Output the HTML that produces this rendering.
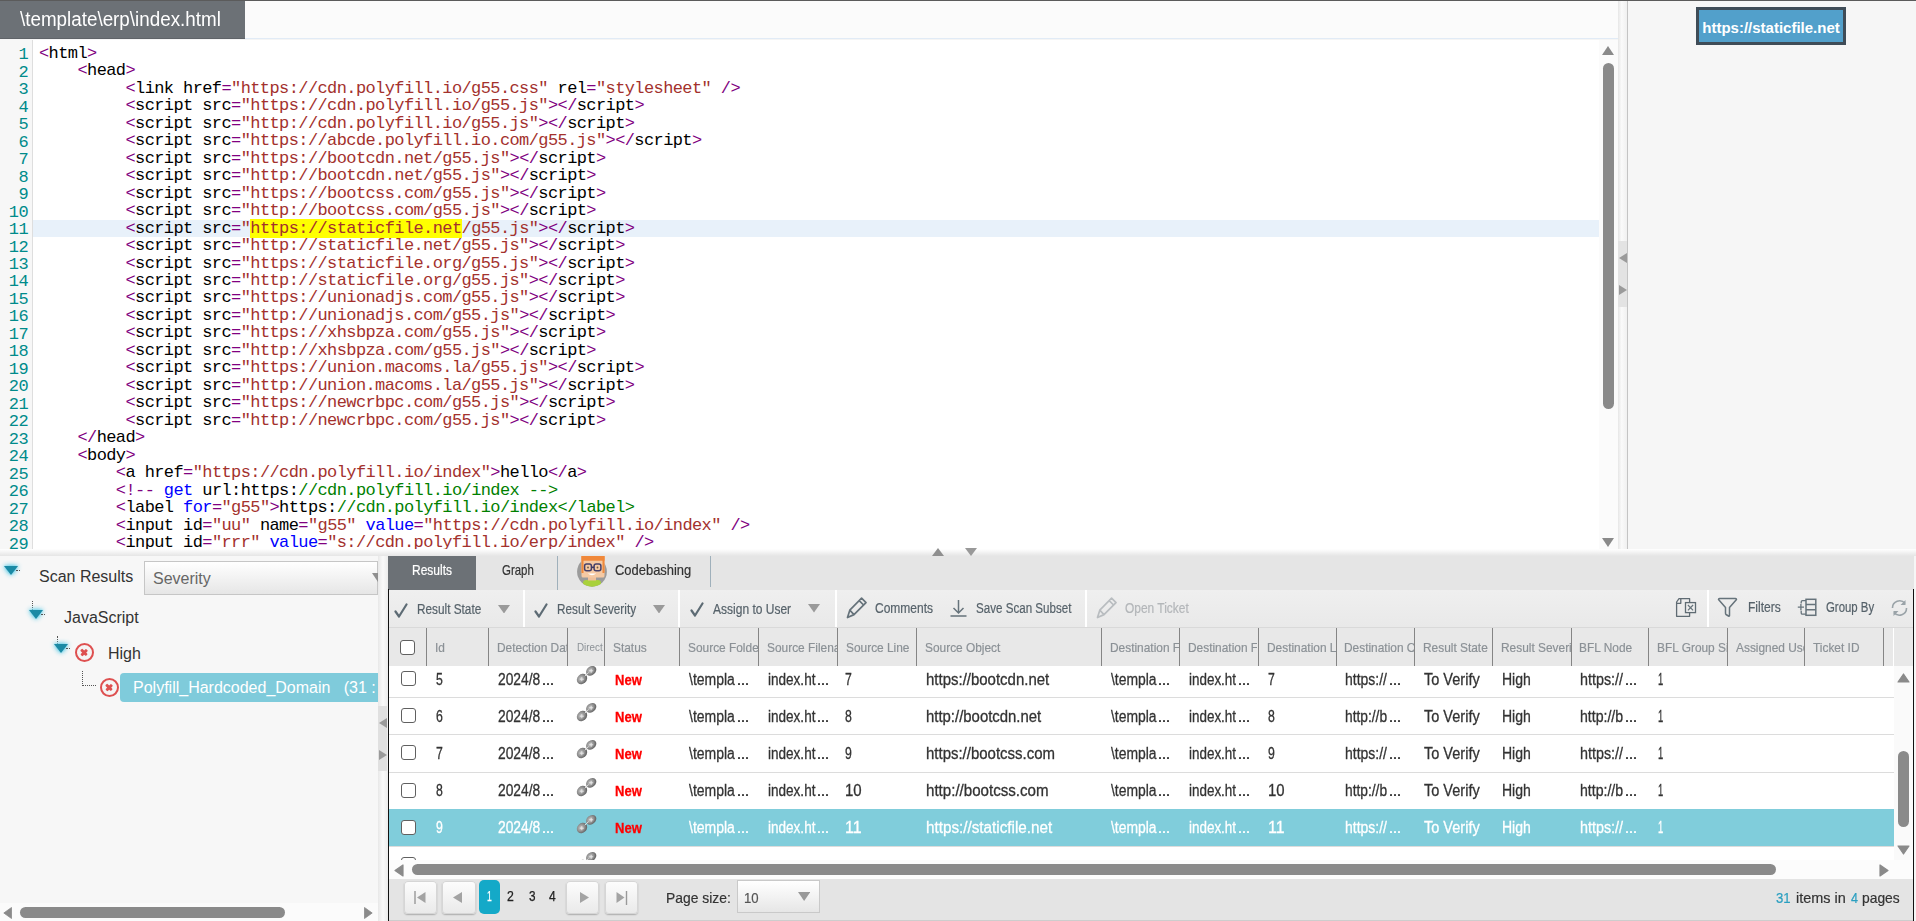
<!DOCTYPE html>
<html><head><meta charset="utf-8"><style>
*{margin:0;padding:0;box-sizing:border-box}
html,body{width:1916px;height:921px;overflow:hidden;background:#f5f5f5;font-family:"Liberation Sans",sans-serif}
.abs{position:absolute}
#topline{left:0;top:0;width:1916px;height:1px;background:#5b5b5b}
#tabbar{left:0;top:1px;width:1618px;height:38px;background:#fbfbfb;border-bottom:1px solid #e1ebf6}
#tab{left:0;top:1px;width:245px;height:38px;background:#6c7176;border-bottom:1px solid #5f6368;color:#fff}
#tabt{left:20px;top:10.2px;font-size:19.5px;line-height:1;white-space:pre;transform:scaleX(0.965);transform-origin:0 0}
#editor{left:0;top:40px;width:1599px;height:509px;background:#fff;overflow:hidden}
#gutter{left:0;top:0;width:33px;height:509px;background:#f7f7f7;border-right:1px solid #dedede}
#curline{left:33px;top:180px;width:1566px;height:17px;background:#e8f1fa}
#nums{left:0;top:6.4px;width:28px;text-align:right;color:#008b8b;letter-spacing:-0.6px;font:17px/17.47px "Liberation Mono",monospace;white-space:pre}
#code{left:39px;top:4.9px;letter-spacing:-0.6px;font:17px/17.47px "Liberation Mono",monospace;white-space:pre;color:#000}
.hl{background:#ffff00;color:#a3312d}
#vscroll{left:1599px;top:40px;width:19px;height:509px;background:#fbfbfb}
#vsplit{left:1618px;top:1px;width:10px;height:548px;background:linear-gradient(90deg,#e6e6e6,#fafafa 40%,#f0f0f0);border-right:1px solid #c4c4c4}
#rpanel{left:1628px;top:1px;width:288px;height:548px;background:#f6f6f6}
#btn{left:1696px;top:7px;width:150px;height:38px;background:#52a0cb;border:3px solid #3f4c57;color:#fff;font-weight:bold;font-size:15px;line-height:35px;text-align:center}
#hsplit{left:0;top:549px;width:1916px;height:7px;background:linear-gradient(#fff,#e5e5e5)}
#lpanel{left:0;top:556px;width:378px;height:365px;background:#f7f7f7;overflow:hidden}
#lsplit{left:378px;top:556px;width:10px;height:365px;background:linear-gradient(90deg,#e8e8e8,#fafafa 50%,#ececec)}
#rbottom{left:388px;top:556px;width:1526px;height:365px;background:#e5e5e5}
/* editor scrollbar */
#vs-up{left:1602px;top:46px;width:0;height:0;border-left:6.5px solid transparent;border-right:6.5px solid transparent;border-bottom:9px solid #8a8a8a}
#vs-thumb{left:1603px;top:63px;width:11px;height:346px;background:#8a8a8a;border-radius:5.5px}
#vs-dn{left:1602px;top:538px;width:0;height:0;border-left:6.5px solid transparent;border-right:6.5px solid transparent;border-top:9px solid #8a8a8a}
#vsplit-mid{left:1618px;top:241px;width:9px;height:66px;background:#e3e3e3}
.arrL{width:0;height:0;border-top:5px solid transparent;border-bottom:5px solid transparent;border-right:8px solid #9a9a9a}
.arrR{width:0;height:0;border-top:5px solid transparent;border-bottom:5px solid transparent;border-left:8px solid #9a9a9a}
.arrU{width:0;height:0;border-left:6.5px solid transparent;border-right:6.5px solid transparent;border-bottom:8px solid #8f8f8f}
.arrD{width:0;height:0;border-left:6px solid transparent;border-right:6px solid transparent;border-top:8px solid #999}
/* left panel */
.tri{width:0;height:0;border-left:7px solid transparent;border-right:7px solid transparent;border-top:9.5px solid #1a8aa5;filter:drop-shadow(0 0 2.5px #58c8e4) drop-shadow(0 0 1px #8fdcef)}
.lbl{font-size:16px;color:#333;white-space:nowrap}
#sev{left:144px;top:561px;width:234px;height:34px;background:linear-gradient(#fff,#e6e6e6);border:1px solid #c6c6c6;font-size:16px;color:#666;line-height:34px;padding-left:8px}
.dotv{border-left:1px dotted #555}
.doth{border-top:1px dotted #555}
.xic{width:19px;height:19px;border:2.6px solid #de5050;border-radius:50%;background:#f5f5f5}
.xic:before,.xic:after{content:"";position:absolute;left:2.7px;top:5.6px;width:8.4px;height:2.7px;border-radius:1px;background:#de5050}
.xic:before{transform:rotate(45deg)}.xic:after{transform:rotate(-45deg)}
#selnode{left:120px;top:673px;width:258px;height:29px;background:#7fcbdb;border-radius:4px 0 0 4px;color:#fff;font-size:16px;line-height:29px;padding-left:13px;white-space:pre;overflow:hidden}
#lhs{left:0;top:903px;width:378px;height:18px;background:#fbfbfb}
#lhs-thumb{left:20px;top:907px;width:265px;height:11px;background:#8a8a8a;border-radius:5.5px}
.t{position:absolute;white-space:pre;line-height:1;transform-origin:0 0}

</style></head><body>
<div id="topline" class="abs"></div>
<div id="tabbar" class="abs"></div>
<div id="tab" class="abs"></div><div id="tabt" class="abs" style="color:#fff">\template\erp\index.html</div>
<div id="editor" class="abs">
 <div id="gutter" class="abs"></div>
 <div id="curline" class="abs"></div>
 <div id="nums" class="abs">1
2
3
4
5
6
7
8
9
10
11
12
13
14
15
16
17
18
19
20
21
22
23
24
25
26
27
28
29</div>
 <div id="code" class="abs"><span style="color:#800080">&lt;</span><span style="color:#000">html</span><span style="color:#800080">&gt;</span>
    <span style="color:#800080">&lt;</span><span style="color:#000">head</span><span style="color:#800080">&gt;</span>
         <span style="color:#800080">&lt;</span><span style="color:#000">link href</span><span style="color:#800080">=</span><span style="color:#a3312d">&quot;https://cdn.polyfill.io/g55.css&quot;</span><span style="color:#000"> rel</span><span style="color:#800080">=</span><span style="color:#a3312d">&quot;stylesheet&quot;</span><span style="color:#800080"> /&gt;</span>
         <span style="color:#800080">&lt;</span><span style="color:#000">script src</span><span style="color:#800080">=</span><span style="color:#a3312d">&quot;https://cdn.polyfill.io/g55.js&quot;</span><span style="color:#800080">&gt;&lt;/</span><span style="color:#000">script</span><span style="color:#800080">&gt;</span>
         <span style="color:#800080">&lt;</span><span style="color:#000">script src</span><span style="color:#800080">=</span><span style="color:#a3312d">&quot;http://cdn.polyfill.io/g55.js&quot;</span><span style="color:#800080">&gt;&lt;/</span><span style="color:#000">script</span><span style="color:#800080">&gt;</span>
         <span style="color:#800080">&lt;</span><span style="color:#000">script src</span><span style="color:#800080">=</span><span style="color:#a3312d">&quot;https://abcde.polyfill.io.com/g55.js&quot;</span><span style="color:#800080">&gt;&lt;/</span><span style="color:#000">script</span><span style="color:#800080">&gt;</span>
         <span style="color:#800080">&lt;</span><span style="color:#000">script src</span><span style="color:#800080">=</span><span style="color:#a3312d">&quot;https://bootcdn.net/g55.js&quot;</span><span style="color:#800080">&gt;&lt;/</span><span style="color:#000">script</span><span style="color:#800080">&gt;</span>
         <span style="color:#800080">&lt;</span><span style="color:#000">script src</span><span style="color:#800080">=</span><span style="color:#a3312d">&quot;http://bootcdn.net/g55.js&quot;</span><span style="color:#800080">&gt;&lt;/</span><span style="color:#000">script</span><span style="color:#800080">&gt;</span>
         <span style="color:#800080">&lt;</span><span style="color:#000">script src</span><span style="color:#800080">=</span><span style="color:#a3312d">&quot;https://bootcss.com/g55.js&quot;</span><span style="color:#800080">&gt;&lt;/</span><span style="color:#000">script</span><span style="color:#800080">&gt;</span>
         <span style="color:#800080">&lt;</span><span style="color:#000">script src</span><span style="color:#800080">=</span><span style="color:#a3312d">&quot;http://bootcss.com/g55.js&quot;</span><span style="color:#800080">&gt;&lt;/</span><span style="color:#000">script</span><span style="color:#800080">&gt;</span>
         <span style="color:#800080">&lt;</span><span style="color:#000">script src</span><span style="color:#800080">=</span><span style="color:#a3312d">&quot;</span><span class="hl">https://staticfile.net</span><span style="color:#a3312d">/g55.js&quot;</span><span style="color:#800080">&gt;&lt;/</span><span style="color:#000">script</span><span style="color:#800080">&gt;</span>
         <span style="color:#800080">&lt;</span><span style="color:#000">script src</span><span style="color:#800080">=</span><span style="color:#a3312d">&quot;http://staticfile.net/g55.js&quot;</span><span style="color:#800080">&gt;&lt;/</span><span style="color:#000">script</span><span style="color:#800080">&gt;</span>
         <span style="color:#800080">&lt;</span><span style="color:#000">script src</span><span style="color:#800080">=</span><span style="color:#a3312d">&quot;https://staticfile.org/g55.js&quot;</span><span style="color:#800080">&gt;&lt;/</span><span style="color:#000">script</span><span style="color:#800080">&gt;</span>
         <span style="color:#800080">&lt;</span><span style="color:#000">script src</span><span style="color:#800080">=</span><span style="color:#a3312d">&quot;http://staticfile.org/g55.js&quot;</span><span style="color:#800080">&gt;&lt;/</span><span style="color:#000">script</span><span style="color:#800080">&gt;</span>
         <span style="color:#800080">&lt;</span><span style="color:#000">script src</span><span style="color:#800080">=</span><span style="color:#a3312d">&quot;https://unionadjs.com/g55.js&quot;</span><span style="color:#800080">&gt;&lt;/</span><span style="color:#000">script</span><span style="color:#800080">&gt;</span>
         <span style="color:#800080">&lt;</span><span style="color:#000">script src</span><span style="color:#800080">=</span><span style="color:#a3312d">&quot;http://unionadjs.com/g55.js&quot;</span><span style="color:#800080">&gt;&lt;/</span><span style="color:#000">script</span><span style="color:#800080">&gt;</span>
         <span style="color:#800080">&lt;</span><span style="color:#000">script src</span><span style="color:#800080">=</span><span style="color:#a3312d">&quot;https://xhsbpza.com/g55.js&quot;</span><span style="color:#800080">&gt;&lt;/</span><span style="color:#000">script</span><span style="color:#800080">&gt;</span>
         <span style="color:#800080">&lt;</span><span style="color:#000">script src</span><span style="color:#800080">=</span><span style="color:#a3312d">&quot;http://xhsbpza.com/g55.js&quot;</span><span style="color:#800080">&gt;&lt;/</span><span style="color:#000">script</span><span style="color:#800080">&gt;</span>
         <span style="color:#800080">&lt;</span><span style="color:#000">script src</span><span style="color:#800080">=</span><span style="color:#a3312d">&quot;https://union.macoms.la/g55.js&quot;</span><span style="color:#800080">&gt;&lt;/</span><span style="color:#000">script</span><span style="color:#800080">&gt;</span>
         <span style="color:#800080">&lt;</span><span style="color:#000">script src</span><span style="color:#800080">=</span><span style="color:#a3312d">&quot;http://union.macoms.la/g55.js&quot;</span><span style="color:#800080">&gt;&lt;/</span><span style="color:#000">script</span><span style="color:#800080">&gt;</span>
         <span style="color:#800080">&lt;</span><span style="color:#000">script src</span><span style="color:#800080">=</span><span style="color:#a3312d">&quot;https://newcrbpc.com/g55.js&quot;</span><span style="color:#800080">&gt;&lt;/</span><span style="color:#000">script</span><span style="color:#800080">&gt;</span>
         <span style="color:#800080">&lt;</span><span style="color:#000">script src</span><span style="color:#800080">=</span><span style="color:#a3312d">&quot;http://newcrbpc.com/g55.js&quot;</span><span style="color:#800080">&gt;&lt;/</span><span style="color:#000">script</span><span style="color:#800080">&gt;</span>
    <span style="color:#800080">&lt;/</span><span style="color:#000">head</span><span style="color:#800080">&gt;</span>
    <span style="color:#800080">&lt;</span><span style="color:#000">body</span><span style="color:#800080">&gt;</span>
        <span style="color:#800080">&lt;</span><span style="color:#000">a href</span><span style="color:#800080">=</span><span style="color:#a3312d">&quot;https://cdn.polyfill.io/index&quot;</span><span style="color:#800080">&gt;</span><span style="color:#000">hello</span><span style="color:#800080">&lt;/</span><span style="color:#000">a</span><span style="color:#800080">&gt;</span>
        <span style="color:#800080">&lt;!--</span> <span style="color:#0000ff">get</span><span style="color:#000"> url:https:</span><span style="color:#008000">//cdn.polyfill.io/index --&gt;</span>
        <span style="color:#800080">&lt;</span><span style="color:#000">label</span> <span style="color:#0000ff">for</span><span style="color:#800080">=</span><span style="color:#a3312d">&quot;g55&quot;</span><span style="color:#800080">&gt;</span><span style="color:#000">https:</span><span style="color:#008000">//cdn.polyfill.io/index&lt;/label&gt;</span>
        <span style="color:#800080">&lt;</span><span style="color:#000">input id</span><span style="color:#800080">=</span><span style="color:#a3312d">&quot;uu&quot;</span><span style="color:#000"> name</span><span style="color:#800080">=</span><span style="color:#a3312d">&quot;g55&quot;</span> <span style="color:#0000ff">value</span><span style="color:#800080">=</span><span style="color:#a3312d">&quot;https://cdn.polyfill.io/index&quot;</span><span style="color:#800080"> /&gt;</span>
        <span style="color:#800080">&lt;</span><span style="color:#000">input id</span><span style="color:#800080">=</span><span style="color:#a3312d">&quot;rrr&quot;</span> <span style="color:#0000ff">value</span><span style="color:#800080">=</span><span style="color:#a3312d">&quot;s://cdn.polyfill.io/erp/index&quot;</span><span style="color:#800080"> /&gt;</span></div>
</div>
<div id="vscroll" class="abs"></div>
<div id="vs-up" class="abs"></div>
<div id="vs-thumb" class="abs"></div>
<div id="vs-dn" class="abs"></div>
<div id="vsplit" class="abs"></div>
<div id="vsplit-mid" class="abs"></div>
<div class="abs arrL" style="left:1619px;top:253px"></div>
<div class="abs arrR" style="left:1619px;top:285px"></div>
<div id="rpanel" class="abs"></div>
<div id="btn" class="abs">https://staticfile.net</div>
<div id="hsplit" class="abs"></div>
<div id="lpanel" class="abs"></div>
<div class="abs tri" style="left:4px;top:566px"></div>
<div class="abs doth" style="left:16px;top:570px;width:4px"></div>
<div class="abs lbl" style="left:39px;top:568px">Scan Results</div>
<div id="sev" class="abs">Severity</div>
<svg class="abs" style="left:372px;top:573px" width="6" height="9" viewBox="0 0 6 9"><path d="M0 0H6V9Z" fill="#8f8f8f"/></svg>
<div class="abs dotv" style="left:32px;top:601px;height:9px"></div>
<div class="abs tri" style="left:29px;top:610px"></div>
<div class="abs doth" style="left:41px;top:614px;width:4px"></div>
<div class="abs lbl" style="left:64px;top:609px">JavaScript</div>
<div class="abs dotv" style="left:57px;top:636px;height:8px"></div>
<div class="abs tri" style="left:54px;top:644px"></div>
<div class="abs doth" style="left:66px;top:648px;width:4px"></div>
<div class="abs xic" style="left:75px;top:643px"></div>
<div class="abs lbl" style="left:108px;top:644.5px">High</div>
<div class="abs dotv" style="left:82px;top:671px;height:15px"></div>
<div class="abs doth" style="left:82px;top:685px;width:14px"></div>
<div class="abs xic" style="left:100px;top:678px"></div>
<div id="selnode" class="abs">Polyfill_Hardcoded_Domain   (31 :</div>
<div id="lhs" class="abs"></div>
<svg class="abs" style="left:3px;top:906.5px" width="9" height="12" viewBox="0 0 9 12"><path d="M0.8 6L8.5 0.5V11.5Z" fill="#8a8a8a" stroke="#8a8a8a" stroke-width="0.8" stroke-linejoin="round"/></svg>
<div id="lhs-thumb" class="abs"></div>
<svg class="abs" style="left:363.5px;top:906.5px" width="9" height="12" viewBox="0 0 9 12"><path d="M8.2 6L0.5 0.5V11.5Z" fill="#8a8a8a" stroke="#8a8a8a" stroke-width="0.8" stroke-linejoin="round"/></svg>
<div id="lsplit" class="abs"></div>
<div class="abs" style="left:378px;top:706px;width:9px;height:65px;background:#e0e0e0"></div>
<div class="abs arrL" style="left:379px;top:717.5px"></div>
<div class="abs arrR" style="left:379px;top:750px"></div>
<div class="abs arrU" style="left:932px;top:548px"></div>
<div class="abs arrD" style="left:965px;top:548px"></div>
<div id="rbottom" class="abs"></div>
<div class="abs" style="left:1914px;top:556px;width:2px;height:365px;background:#f6f6f6"></div>
<div class="abs" style="left:388px;top:556px;width:88px;height:34px;background:#6c7176"></div>
<div class="abs t" style="left:412.00px;top:562.96px;font-size:14.5px;color:#fff;transform:scaleX(0.8269);-webkit-text-stroke:0.20px #fff;">Results</div>
<div class="abs t" style="left:501.60px;top:562.96px;font-size:14.5px;color:#333;transform:scaleX(0.7876);-webkit-text-stroke:0.20px #333;">Graph</div>
<div class="abs" style="left:557px;top:556px;width:1px;height:34px;background:#9fb0bb"></div>
<div class="abs" style="left:710px;top:556px;width:1px;height:31px;background:#9fb0bb"></div>
<div class="abs t" style="left:614.70px;top:562.96px;font-size:14.5px;color:#333;transform:scaleX(0.8924);-webkit-text-stroke:0.20px #333;">Codebashing</div>
<svg class="abs" style="left:576px;top:555px" width="32" height="32" viewBox="0 0 32 32">
<defs><clipPath id="cav"><circle cx="16" cy="16.8" r="14.9"/></clipPath></defs>
<circle cx="16" cy="16.8" r="14.9" fill="#9b9b9b"/>
<rect x="7" y="25" width="18" height="8" rx="3" fill="#a9d13b" clip-path="url(#cav)"/>
<rect x="12" y="21" width="8" height="4.5" fill="#f0c09a"/>
<rect x="5.5" y="1" width="23" height="21.6" rx="1.5" fill="#f5c9a3"/>
<rect x="5.5" y="1" width="23" height="4.7" fill="#f0883a"/>
<rect x="5.5" y="1" width="2" height="17" fill="#f0883a"/>
<rect x="26.5" y="1" width="2" height="17" fill="#f0883a"/>
<rect x="8.6" y="8.9" width="6.8" height="6.8" rx="2" fill="none" stroke="#45406a" stroke-width="1.5"/>
<rect x="18.1" y="8.9" width="6.8" height="6.8" rx="2" fill="none" stroke="#45406a" stroke-width="1.5"/>
<path d="M15.4 12.3H18.1" stroke="#3e3862" stroke-width="1.6"/>
<circle cx="12" cy="12.5" r="0.9" fill="#6b5a40"/><circle cx="21.5" cy="12.5" r="0.9" fill="#6b5a40"/>
<path d="M11.8 18.6Q16 21.8 20.2 18.6Z" fill="#fff"/>
</svg>
<div class="abs" style="left:388px;top:590px;width:1525px;height:38px;background:linear-gradient(#efefef,#e9e9e9);border-bottom:1px solid #d9d9d9"></div>
<div class="abs" style="left:387.5px;top:589px;width:1.5px;height:332px;background:#111"></div>
<div class="abs" style="left:1912.5px;top:589px;width:1.5px;height:332px;background:#111"></div>
<svg class="abs" style="left:393.5px;top:602.5px" width="14" height="15" viewBox="0 0 14 15"><path d="M1.5 8.5 L5 13.5 L12.5 1.5" fill="none" stroke="#5d6b74" stroke-width="2.2" stroke-linejoin="round" stroke-linecap="round"/></svg>
<div class="abs t" style="left:416.90px;top:602.17px;font-size:14px;color:#56626a;transform:scaleX(0.8420);-webkit-text-stroke:0.20px #56626a;">Result State</div>
<svg class="abs" style="left:498px;top:604.7px" width="12" height="8.5" viewBox="0 0 12 8.5"><path d="M0 0H12L6.0 8.5Z" fill="#9a9a9a"/></svg>
<div class="abs" style="left:523px;top:590px;width:2px;height:37px;background:#fff"></div>
<svg class="abs" style="left:533.5px;top:602.5px" width="14" height="15" viewBox="0 0 14 15"><path d="M1.5 8.5 L5 13.5 L12.5 1.5" fill="none" stroke="#5d6b74" stroke-width="2.2" stroke-linejoin="round" stroke-linecap="round"/></svg>
<div class="abs t" style="left:557.40px;top:602.17px;font-size:14px;color:#56626a;transform:scaleX(0.8393);-webkit-text-stroke:0.20px #56626a;">Result Severity</div>
<svg class="abs" style="left:653px;top:604.7px" width="12" height="8.5" viewBox="0 0 12 8.5"><path d="M0 0H12L6.0 8.5Z" fill="#9a9a9a"/></svg>
<div class="abs" style="left:678px;top:590px;width:2px;height:37px;background:#fff"></div>
<svg class="abs" style="left:689.5px;top:602px" width="14" height="15" viewBox="0 0 14 15"><path d="M1.5 8.5 L5 13.5 L12.5 1.5" fill="none" stroke="#5d6b74" stroke-width="2.2" stroke-linejoin="round" stroke-linecap="round"/></svg>
<div class="abs t" style="left:712.60px;top:601.57px;font-size:14px;color:#56626a;transform:scaleX(0.8582);-webkit-text-stroke:0.20px #56626a;">Assign to User</div>
<svg class="abs" style="left:807.5px;top:604.2px" width="12" height="8.5" viewBox="0 0 12 8.5"><path d="M0 0H12L6.0 8.5Z" fill="#9a9a9a"/></svg>
<div class="abs" style="left:835px;top:590px;width:2px;height:37px;background:#fff"></div>
<svg class="abs" style="left:845.5px;top:597px" width="22" height="22" viewBox="0 0 22 22"><path d="M15.6 1.2 L20 5.6 L8 17.6 L1.5 20.5 L3.8 13.2 Z M13.2 3.6 L17.6 8 M3.8 13.2 L8 17.6" fill="none" stroke="#66737b" stroke-width="1.7" stroke-linejoin="round"/></svg>
<div class="abs t" style="left:874.80px;top:600.97px;font-size:14px;color:#56626a;transform:scaleX(0.8576);-webkit-text-stroke:0.20px #56626a;">Comments</div>
<svg class="abs" style="left:950px;top:599px" width="17" height="18" viewBox="0 0 17 18"><path d="M8.5 1V14 M3.5 9L8.5 14L13.5 9 M0.5 17H16.5" fill="none" stroke="#66737b" stroke-width="1.5"/></svg>
<div class="abs t" style="left:975.80px;top:600.97px;font-size:14px;color:#56626a;transform:scaleX(0.8286);-webkit-text-stroke:0.20px #56626a;">Save Scan Subset</div>
<div class="abs" style="left:1085px;top:590px;width:2px;height:37px;background:#fff"></div>
<svg class="abs" style="left:1095.5px;top:597px" width="22" height="22" viewBox="0 0 22 22"><path d="M15.6 1.2 L20 5.6 L8 17.6 L1.5 20.5 L3.8 13.2 Z M13.2 3.6 L17.6 8 M3.8 13.2 L8 17.6" fill="none" stroke="#b9bdc0" stroke-width="1.7" stroke-linejoin="round"/></svg>
<div class="abs t" style="left:1124.50px;top:600.97px;font-size:14px;color:#b3b6b9;transform:scaleX(0.8535);-webkit-text-stroke:0.20px #b3b6b9;">Open Ticket</div>
<svg class="abs" style="left:1675px;top:597px" width="22" height="21" viewBox="0 0 22 21"><path d="M14.6 5.3V1.6H4L1.6 5V19.3H14.6V15.8 M5.8 1.6V6.3H1.6" fill="none" stroke="#5f6b73" stroke-width="1.3" stroke-linejoin="round"/><rect x="10.5" y="5.6" width="10" height="10" fill="#eee" stroke="#5f6b73" stroke-width="1.3"/><path d="M12.9 8L18.1 13.4M18.1 8L12.9 13.4" stroke="#66737b" stroke-width="1.2"/></svg>
<div class="abs" style="left:1707px;top:590px;width:2px;height:37px;background:#fff"></div>
<svg class="abs" style="left:1717px;top:597px" width="21" height="21" viewBox="0 0 21 21"><path d="M1.5 2.5Q1.5 1.5 2.5 1.5H18.5Q19.5 1.5 19.5 2.5L12.5 10.5V18.5Q12.5 19.5 11.5 19L9 17.5Q8.5 17 8.5 16V10.5Z" fill="none" stroke="#66737b" stroke-width="1.5" stroke-linejoin="round"/></svg>
<div class="abs t" style="left:1747.50px;top:600.17px;font-size:14px;color:#56626a;transform:scaleX(0.8603);-webkit-text-stroke:0.20px #56626a;">Filters</div>
<svg class="abs" style="left:1797px;top:598px" width="20" height="19" viewBox="0 0 20 19"><rect x="9" y="1.3" width="9.8" height="16" fill="none" stroke="#66737b" stroke-width="1.5"/><path d="M9 6.6H18.8M9 11.7H18.8" stroke="#66737b" stroke-width="1.5"/><path d="M9 2.6H5.5Q4.2 2.6 4.2 3.9V5.5M4.2 12.7V15Q4.2 16.2 5.5 16.2H9M0.8 9.1H7M3.9 6V12.2" fill="none" stroke="#66737b" stroke-width="1.3"/></svg>
<div class="abs t" style="left:1825.70px;top:600.17px;font-size:14px;color:#56626a;transform:scaleX(0.8135);-webkit-text-stroke:0.20px #56626a;">Group By</div>
<svg class="abs" style="left:1890px;top:599px" width="19" height="18" viewBox="0 0 19 18"><path d="M2.5 9A7 7 0 0 1 15 4.5 M16.5 9A7 7 0 0 1 4 13.5" fill="none" stroke="#9aa3a8" stroke-width="1.6"/><path d="M15.5 1V6H10.5Z M3.5 17V12H8.5Z" fill="#9aa3a8"/></svg>
<div class="abs" style="left:389px;top:628px;width:1524px;height:38px;background:#e8e8e8"></div>
<div class="abs" style="left:400px;top:640px;width:15px;height:15px;border:1.4px solid #606060;border-radius:3px;background:#fff"></div>
<div class="abs" style="left:426px;top:628px;width:1px;height:38px;background:#858585"></div>
<div class="abs" style="left:488px;top:628px;width:1px;height:38px;background:#858585"></div>
<div class="abs" style="left:567px;top:628px;width:1px;height:38px;background:#858585"></div>
<div class="abs" style="left:604px;top:628px;width:1px;height:38px;background:#858585"></div>
<div class="abs" style="left:679px;top:628px;width:1px;height:38px;background:#858585"></div>
<div class="abs" style="left:758px;top:628px;width:1px;height:38px;background:#858585"></div>
<div class="abs" style="left:837px;top:628px;width:1px;height:38px;background:#858585"></div>
<div class="abs" style="left:916px;top:628px;width:1px;height:38px;background:#858585"></div>
<div class="abs" style="left:1101px;top:628px;width:1px;height:38px;background:#858585"></div>
<div class="abs" style="left:1179px;top:628px;width:1px;height:38px;background:#858585"></div>
<div class="abs" style="left:1258px;top:628px;width:1px;height:38px;background:#858585"></div>
<div class="abs" style="left:1336px;top:628px;width:1px;height:38px;background:#858585"></div>
<div class="abs" style="left:1414px;top:628px;width:1px;height:38px;background:#858585"></div>
<div class="abs" style="left:1492px;top:628px;width:1px;height:38px;background:#858585"></div>
<div class="abs" style="left:1571px;top:628px;width:1px;height:38px;background:#858585"></div>
<div class="abs" style="left:1648px;top:628px;width:1px;height:38px;background:#858585"></div>
<div class="abs" style="left:1727px;top:628px;width:1px;height:38px;background:#858585"></div>
<div class="abs" style="left:1804px;top:628px;width:1px;height:38px;background:#858585"></div>
<div class="abs" style="left:1883px;top:628px;width:1px;height:38px;background:#858585"></div>
<div class="abs" style="left:1893px;top:628px;width:1.2px;height:38px;background:#fff"></div>
<div class="abs" style="left:434.8px;top:628px;width:53.1px;height:38px;overflow:hidden"><div class="t" style="position:absolute;left:0;top:13.10px;font-size:13px;color:#8b9196;transform:scaleX(0.915);-webkit-text-stroke:0.2px #8b9196">Id</div></div>
<div class="abs" style="left:497.2px;top:628px;width:69.6px;height:38px;overflow:hidden"><div class="t" style="position:absolute;left:0;top:13.10px;font-size:13px;color:#8b9196;transform:scaleX(0.915);-webkit-text-stroke:0.2px #8b9196">Detection Date</div></div>
<div class="abs" style="left:613.4px;top:628px;width:65.8px;height:38px;overflow:hidden"><div class="t" style="position:absolute;left:0;top:13.10px;font-size:13px;color:#8b9196;transform:scaleX(0.915);-webkit-text-stroke:0.2px #8b9196">Status</div></div>
<div class="abs" style="left:688.3px;top:628px;width:69.7px;height:38px;overflow:hidden"><div class="t" style="position:absolute;left:0;top:13.10px;font-size:13px;color:#8b9196;transform:scaleX(0.915);-webkit-text-stroke:0.2px #8b9196">Source Folder</div></div>
<div class="abs" style="left:767.0px;top:628px;width:69.7px;height:38px;overflow:hidden"><div class="t" style="position:absolute;left:0;top:13.10px;font-size:13px;color:#8b9196;transform:scaleX(0.915);-webkit-text-stroke:0.2px #8b9196">Source Filename</div></div>
<div class="abs" style="left:845.6px;top:628px;width:70.4px;height:38px;overflow:hidden"><div class="t" style="position:absolute;left:0;top:13.10px;font-size:13px;color:#8b9196;transform:scaleX(0.915);-webkit-text-stroke:0.2px #8b9196">Source Line</div></div>
<div class="abs" style="left:924.6px;top:628px;width:175.9px;height:38px;overflow:hidden"><div class="t" style="position:absolute;left:0;top:13.10px;font-size:13px;color:#8b9196;transform:scaleX(0.915);-webkit-text-stroke:0.2px #8b9196">Source Object</div></div>
<div class="abs" style="left:1109.7px;top:628px;width:69.1px;height:38px;overflow:hidden"><div class="t" style="position:absolute;left:0;top:13.10px;font-size:13px;color:#8b9196;transform:scaleX(0.915);-webkit-text-stroke:0.2px #8b9196">Destination Folder</div></div>
<div class="abs" style="left:1188.4px;top:628px;width:69.1px;height:38px;overflow:hidden"><div class="t" style="position:absolute;left:0;top:13.10px;font-size:13px;color:#8b9196;transform:scaleX(0.915);-webkit-text-stroke:0.2px #8b9196">Destination Filename</div></div>
<div class="abs" style="left:1267.0px;top:628px;width:68.9px;height:38px;overflow:hidden"><div class="t" style="position:absolute;left:0;top:13.10px;font-size:13px;color:#8b9196;transform:scaleX(0.915);-webkit-text-stroke:0.2px #8b9196">Destination Line</div></div>
<div class="abs" style="left:1344.4px;top:628px;width:69.5px;height:38px;overflow:hidden"><div class="t" style="position:absolute;left:0;top:13.10px;font-size:13px;color:#8b9196;transform:scaleX(0.915);-webkit-text-stroke:0.2px #8b9196">Destination Object</div></div>
<div class="abs" style="left:1423.2px;top:628px;width:68.7px;height:38px;overflow:hidden"><div class="t" style="position:absolute;left:0;top:13.10px;font-size:13px;color:#8b9196;transform:scaleX(0.915);-webkit-text-stroke:0.2px #8b9196">Result State</div></div>
<div class="abs" style="left:1500.7px;top:628px;width:70.4px;height:38px;overflow:hidden"><div class="t" style="position:absolute;left:0;top:13.10px;font-size:13px;color:#8b9196;transform:scaleX(0.915);-webkit-text-stroke:0.2px #8b9196">Result Severity</div></div>
<div class="abs" style="left:1579.3px;top:628px;width:68.7px;height:38px;overflow:hidden"><div class="t" style="position:absolute;left:0;top:13.10px;font-size:13px;color:#8b9196;transform:scaleX(0.915);-webkit-text-stroke:0.2px #8b9196">BFL Node</div></div>
<div class="abs" style="left:1656.8px;top:628px;width:70.2px;height:38px;overflow:hidden"><div class="t" style="position:absolute;left:0;top:13.10px;font-size:13px;color:#8b9196;transform:scaleX(0.915);-webkit-text-stroke:0.2px #8b9196">BFL Group Size</div></div>
<div class="abs" style="left:1735.6px;top:628px;width:68.2px;height:38px;overflow:hidden"><div class="t" style="position:absolute;left:0;top:13.10px;font-size:13px;color:#8b9196;transform:scaleX(0.915);-webkit-text-stroke:0.2px #8b9196">Assigned User</div></div>
<div class="abs" style="left:1812.6px;top:628px;width:70.3px;height:38px;overflow:hidden"><div class="t" style="position:absolute;left:0;top:13.10px;font-size:13px;color:#8b9196;transform:scaleX(0.915);-webkit-text-stroke:0.2px #8b9196">Ticket ID</div></div>
<div class="abs t" style="left:576.70px;top:642.06px;font-size:11px;color:#8b9196;transform:scaleX(0.8939);">Direct</div>
<div class="abs" style="left:389px;top:666px;width:1505px;height:194px;background:#fff;overflow:hidden">
<div class="abs" style="left:0;top:31.30px;width:1505px;height:1px;background:#dcdcdc"></div>
<div class="abs" style="left:11.600000000000023px;top:5.2000000000000455px;width:15px;height:15px;border:1.4px solid #606060;border-radius:3px;background:#fff"></div>
<div class="abs t" style="left:46.60px;top:5.51px;font-size:16px;color:#333;transform:scaleX(0.7662);-webkit-text-stroke:0.30px #333;">5</div>
<div class="abs t" style="left:108.90px;top:5.51px;font-size:16px;color:#333;transform:scaleX(0.8633);-webkit-text-stroke:0.30px #333;">2024/8</div>
<div class="abs" style="left:153.60px;top:16.70px;width:2.1px;height:2.1px;background:#333;border-radius:0.4px"></div>
<div class="abs" style="left:157.70px;top:16.70px;width:2.1px;height:2.1px;background:#333;border-radius:0.4px"></div>
<div class="abs" style="left:161.80px;top:16.70px;width:2.1px;height:2.1px;background:#333;border-radius:0.4px"></div>
<svg class="abs" style="left:187px;top:-0.80px" width="22" height="21" viewBox="0 0 22 21"><defs><radialGradient id="lg0" cx="0.45" cy="0.4" r="0.6"><stop offset="0" stop-color="#c8c8c8"/><stop offset="0.6" stop-color="#8e8e8e"/><stop offset="1" stop-color="#5e5e5e"/></radialGradient></defs><ellipse cx="6" cy="14" rx="5.6" ry="4.7" transform="rotate(-45 6 14)" fill="url(#lg0)"/><ellipse cx="15.2" cy="5.8" rx="5.6" ry="4.3" transform="rotate(-40 15.2 5.8)" fill="url(#lg0)"/><path d="M8.8 11.2L12.6 7.6" stroke="#e8e8e8" stroke-width="0.9"/><path d="M5.8 12.2v4M3.8 14.2h4M15.2 3.8v4M13.2 5.8h4" stroke="#eaeaea" stroke-width="0.9"/></svg>
<div class="abs t" style="left:225.50px;top:6.09px;font-size:15.3px;color:#f00;font-weight:bold;transform:scaleX(0.8540);-webkit-text-stroke:0.30px #f00;">New</div>
<div class="abs t" style="left:300.40px;top:5.51px;font-size:16px;color:#333;transform:scaleX(0.8741);-webkit-text-stroke:0.30px #333;">\templa</div>
<div class="abs" style="left:348.80px;top:16.70px;width:2.1px;height:2.1px;background:#333;border-radius:0.4px"></div>
<div class="abs" style="left:352.90px;top:16.70px;width:2.1px;height:2.1px;background:#333;border-radius:0.4px"></div>
<div class="abs" style="left:357.00px;top:16.70px;width:2.1px;height:2.1px;background:#333;border-radius:0.4px"></div>
<div class="abs t" style="left:379.00px;top:5.51px;font-size:16px;color:#333;transform:scaleX(0.8464);-webkit-text-stroke:0.30px #333;">index.ht</div>
<div class="abs" style="left:428.80px;top:16.70px;width:2.1px;height:2.1px;background:#333;border-radius:0.4px"></div>
<div class="abs" style="left:432.90px;top:16.70px;width:2.1px;height:2.1px;background:#333;border-radius:0.4px"></div>
<div class="abs" style="left:437.00px;top:16.70px;width:2.1px;height:2.1px;background:#333;border-radius:0.4px"></div>
<div class="abs t" style="left:456.40px;top:5.51px;font-size:16px;color:#333;transform:scaleX(0.7662);-webkit-text-stroke:0.30px #333;">7</div>
<div class="abs t" style="left:536.90px;top:5.51px;font-size:16px;color:#333;transform:scaleX(0.9360);-webkit-text-stroke:0.30px #333;">https://bootcdn.net</div>
<div class="abs t" style="left:721.70px;top:5.51px;font-size:16px;color:#333;transform:scaleX(0.8684);-webkit-text-stroke:0.30px #333;">\templa</div>
<div class="abs" style="left:769.80px;top:16.70px;width:2.1px;height:2.1px;background:#333;border-radius:0.4px"></div>
<div class="abs" style="left:773.90px;top:16.70px;width:2.1px;height:2.1px;background:#333;border-radius:0.4px"></div>
<div class="abs" style="left:778.00px;top:16.70px;width:2.1px;height:2.1px;background:#333;border-radius:0.4px"></div>
<div class="abs t" style="left:800.40px;top:5.51px;font-size:16px;color:#333;transform:scaleX(0.8393);-webkit-text-stroke:0.30px #333;">index.ht</div>
<div class="abs" style="left:849.80px;top:16.70px;width:2.1px;height:2.1px;background:#333;border-radius:0.4px"></div>
<div class="abs" style="left:853.90px;top:16.70px;width:2.1px;height:2.1px;background:#333;border-radius:0.4px"></div>
<div class="abs" style="left:858.00px;top:16.70px;width:2.1px;height:2.1px;background:#333;border-radius:0.4px"></div>
<div class="abs t" style="left:879.00px;top:5.51px;font-size:16px;color:#333;transform:scaleX(0.7662);-webkit-text-stroke:0.30px #333;">7</div>
<div class="abs t" style="left:956.40px;top:5.51px;font-size:16px;color:#333;transform:scaleX(0.8727);-webkit-text-stroke:0.30px #333;">https://</div>
<div class="abs" style="left:1000.80px;top:16.70px;width:2.1px;height:2.1px;background:#333;border-radius:0.4px"></div>
<div class="abs" style="left:1004.90px;top:16.70px;width:2.1px;height:2.1px;background:#333;border-radius:0.4px"></div>
<div class="abs" style="left:1009.00px;top:16.70px;width:2.1px;height:2.1px;background:#333;border-radius:0.4px"></div>
<div class="abs t" style="left:1035.20px;top:5.51px;font-size:16px;color:#333;transform:scaleX(0.9075);-webkit-text-stroke:0.30px #333;">To Verify</div>
<div class="abs t" style="left:1112.70px;top:5.51px;font-size:16px;color:#333;transform:scaleX(0.8760);-webkit-text-stroke:0.30px #333;">High</div>
<div class="abs t" style="left:1191.30px;top:5.51px;font-size:16px;color:#333;transform:scaleX(0.8956);-webkit-text-stroke:0.30px #333;">https://</div>
<div class="abs" style="left:1236.80px;top:16.70px;width:2.1px;height:2.1px;background:#333;border-radius:0.4px"></div>
<div class="abs" style="left:1240.90px;top:16.70px;width:2.1px;height:2.1px;background:#333;border-radius:0.4px"></div>
<div class="abs" style="left:1245.00px;top:16.70px;width:2.1px;height:2.1px;background:#333;border-radius:0.4px"></div>
<div class="abs t" style="left:1269.30px;top:5.51px;font-size:16px;color:#333;transform:scaleX(0.5859);-webkit-text-stroke:0.30px #333;">1</div>
<div class="abs" style="left:0;top:68.40px;width:1505px;height:1px;background:#dcdcdc"></div>
<div class="abs" style="left:11.600000000000023px;top:42.30000000000007px;width:15px;height:15px;border:1.4px solid #606060;border-radius:3px;background:#fff"></div>
<div class="abs t" style="left:46.60px;top:42.61px;font-size:16px;color:#333;transform:scaleX(0.7662);-webkit-text-stroke:0.30px #333;">6</div>
<div class="abs t" style="left:108.90px;top:42.61px;font-size:16px;color:#333;transform:scaleX(0.8633);-webkit-text-stroke:0.30px #333;">2024/8</div>
<div class="abs" style="left:153.60px;top:53.80px;width:2.1px;height:2.1px;background:#333;border-radius:0.4px"></div>
<div class="abs" style="left:157.70px;top:53.80px;width:2.1px;height:2.1px;background:#333;border-radius:0.4px"></div>
<div class="abs" style="left:161.80px;top:53.80px;width:2.1px;height:2.1px;background:#333;border-radius:0.4px"></div>
<svg class="abs" style="left:187px;top:36.30px" width="22" height="21" viewBox="0 0 22 21"><defs><radialGradient id="lg1" cx="0.45" cy="0.4" r="0.6"><stop offset="0" stop-color="#c8c8c8"/><stop offset="0.6" stop-color="#8e8e8e"/><stop offset="1" stop-color="#5e5e5e"/></radialGradient></defs><ellipse cx="6" cy="14" rx="5.6" ry="4.7" transform="rotate(-45 6 14)" fill="url(#lg1)"/><ellipse cx="15.2" cy="5.8" rx="5.6" ry="4.3" transform="rotate(-40 15.2 5.8)" fill="url(#lg1)"/><path d="M8.8 11.2L12.6 7.6" stroke="#e8e8e8" stroke-width="0.9"/><path d="M5.8 12.2v4M3.8 14.2h4M15.2 3.8v4M13.2 5.8h4" stroke="#eaeaea" stroke-width="0.9"/></svg>
<div class="abs t" style="left:225.50px;top:43.19px;font-size:15.3px;color:#f00;font-weight:bold;transform:scaleX(0.8540);-webkit-text-stroke:0.30px #f00;">New</div>
<div class="abs t" style="left:300.40px;top:42.61px;font-size:16px;color:#333;transform:scaleX(0.8741);-webkit-text-stroke:0.30px #333;">\templa</div>
<div class="abs" style="left:348.80px;top:53.80px;width:2.1px;height:2.1px;background:#333;border-radius:0.4px"></div>
<div class="abs" style="left:352.90px;top:53.80px;width:2.1px;height:2.1px;background:#333;border-radius:0.4px"></div>
<div class="abs" style="left:357.00px;top:53.80px;width:2.1px;height:2.1px;background:#333;border-radius:0.4px"></div>
<div class="abs t" style="left:379.00px;top:42.61px;font-size:16px;color:#333;transform:scaleX(0.8464);-webkit-text-stroke:0.30px #333;">index.ht</div>
<div class="abs" style="left:428.80px;top:53.80px;width:2.1px;height:2.1px;background:#333;border-radius:0.4px"></div>
<div class="abs" style="left:432.90px;top:53.80px;width:2.1px;height:2.1px;background:#333;border-radius:0.4px"></div>
<div class="abs" style="left:437.00px;top:53.80px;width:2.1px;height:2.1px;background:#333;border-radius:0.4px"></div>
<div class="abs t" style="left:456.40px;top:42.61px;font-size:16px;color:#333;transform:scaleX(0.7662);-webkit-text-stroke:0.30px #333;">8</div>
<div class="abs t" style="left:536.90px;top:42.61px;font-size:16px;color:#333;transform:scaleX(0.9319);-webkit-text-stroke:0.30px #333;">http://bootcdn.net</div>
<div class="abs t" style="left:721.70px;top:42.61px;font-size:16px;color:#333;transform:scaleX(0.8684);-webkit-text-stroke:0.30px #333;">\templa</div>
<div class="abs" style="left:769.80px;top:53.80px;width:2.1px;height:2.1px;background:#333;border-radius:0.4px"></div>
<div class="abs" style="left:773.90px;top:53.80px;width:2.1px;height:2.1px;background:#333;border-radius:0.4px"></div>
<div class="abs" style="left:778.00px;top:53.80px;width:2.1px;height:2.1px;background:#333;border-radius:0.4px"></div>
<div class="abs t" style="left:800.40px;top:42.61px;font-size:16px;color:#333;transform:scaleX(0.8393);-webkit-text-stroke:0.30px #333;">index.ht</div>
<div class="abs" style="left:849.80px;top:53.80px;width:2.1px;height:2.1px;background:#333;border-radius:0.4px"></div>
<div class="abs" style="left:853.90px;top:53.80px;width:2.1px;height:2.1px;background:#333;border-radius:0.4px"></div>
<div class="abs" style="left:858.00px;top:53.80px;width:2.1px;height:2.1px;background:#333;border-radius:0.4px"></div>
<div class="abs t" style="left:879.00px;top:42.61px;font-size:16px;color:#333;transform:scaleX(0.7662);-webkit-text-stroke:0.30px #333;">8</div>
<div class="abs t" style="left:956.40px;top:42.61px;font-size:16px;color:#333;transform:scaleX(0.8593);-webkit-text-stroke:0.30px #333;">http://b</div>
<div class="abs" style="left:1000.80px;top:53.80px;width:2.1px;height:2.1px;background:#333;border-radius:0.4px"></div>
<div class="abs" style="left:1004.90px;top:53.80px;width:2.1px;height:2.1px;background:#333;border-radius:0.4px"></div>
<div class="abs" style="left:1009.00px;top:53.80px;width:2.1px;height:2.1px;background:#333;border-radius:0.4px"></div>
<div class="abs t" style="left:1035.20px;top:42.61px;font-size:16px;color:#333;transform:scaleX(0.9075);-webkit-text-stroke:0.30px #333;">To Verify</div>
<div class="abs t" style="left:1112.70px;top:42.61px;font-size:16px;color:#333;transform:scaleX(0.8760);-webkit-text-stroke:0.30px #333;">High</div>
<div class="abs t" style="left:1191.30px;top:42.61px;font-size:16px;color:#333;transform:scaleX(0.8818);-webkit-text-stroke:0.30px #333;">http://b</div>
<div class="abs" style="left:1236.80px;top:53.80px;width:2.1px;height:2.1px;background:#333;border-radius:0.4px"></div>
<div class="abs" style="left:1240.90px;top:53.80px;width:2.1px;height:2.1px;background:#333;border-radius:0.4px"></div>
<div class="abs" style="left:1245.00px;top:53.80px;width:2.1px;height:2.1px;background:#333;border-radius:0.4px"></div>
<div class="abs t" style="left:1269.30px;top:42.61px;font-size:16px;color:#333;transform:scaleX(0.5859);-webkit-text-stroke:0.30px #333;">1</div>
<div class="abs" style="left:0;top:105.50px;width:1505px;height:1px;background:#dcdcdc"></div>
<div class="abs" style="left:11.600000000000023px;top:79.40000000000009px;width:15px;height:15px;border:1.4px solid #606060;border-radius:3px;background:#fff"></div>
<div class="abs t" style="left:46.60px;top:79.71px;font-size:16px;color:#333;transform:scaleX(0.7662);-webkit-text-stroke:0.30px #333;">7</div>
<div class="abs t" style="left:108.90px;top:79.71px;font-size:16px;color:#333;transform:scaleX(0.8633);-webkit-text-stroke:0.30px #333;">2024/8</div>
<div class="abs" style="left:153.60px;top:90.90px;width:2.1px;height:2.1px;background:#333;border-radius:0.4px"></div>
<div class="abs" style="left:157.70px;top:90.90px;width:2.1px;height:2.1px;background:#333;border-radius:0.4px"></div>
<div class="abs" style="left:161.80px;top:90.90px;width:2.1px;height:2.1px;background:#333;border-radius:0.4px"></div>
<svg class="abs" style="left:187px;top:73.40px" width="22" height="21" viewBox="0 0 22 21"><defs><radialGradient id="lg2" cx="0.45" cy="0.4" r="0.6"><stop offset="0" stop-color="#c8c8c8"/><stop offset="0.6" stop-color="#8e8e8e"/><stop offset="1" stop-color="#5e5e5e"/></radialGradient></defs><ellipse cx="6" cy="14" rx="5.6" ry="4.7" transform="rotate(-45 6 14)" fill="url(#lg2)"/><ellipse cx="15.2" cy="5.8" rx="5.6" ry="4.3" transform="rotate(-40 15.2 5.8)" fill="url(#lg2)"/><path d="M8.8 11.2L12.6 7.6" stroke="#e8e8e8" stroke-width="0.9"/><path d="M5.8 12.2v4M3.8 14.2h4M15.2 3.8v4M13.2 5.8h4" stroke="#eaeaea" stroke-width="0.9"/></svg>
<div class="abs t" style="left:225.50px;top:80.29px;font-size:15.3px;color:#f00;font-weight:bold;transform:scaleX(0.8540);-webkit-text-stroke:0.30px #f00;">New</div>
<div class="abs t" style="left:300.40px;top:79.71px;font-size:16px;color:#333;transform:scaleX(0.8741);-webkit-text-stroke:0.30px #333;">\templa</div>
<div class="abs" style="left:348.80px;top:90.90px;width:2.1px;height:2.1px;background:#333;border-radius:0.4px"></div>
<div class="abs" style="left:352.90px;top:90.90px;width:2.1px;height:2.1px;background:#333;border-radius:0.4px"></div>
<div class="abs" style="left:357.00px;top:90.90px;width:2.1px;height:2.1px;background:#333;border-radius:0.4px"></div>
<div class="abs t" style="left:379.00px;top:79.71px;font-size:16px;color:#333;transform:scaleX(0.8464);-webkit-text-stroke:0.30px #333;">index.ht</div>
<div class="abs" style="left:428.80px;top:90.90px;width:2.1px;height:2.1px;background:#333;border-radius:0.4px"></div>
<div class="abs" style="left:432.90px;top:90.90px;width:2.1px;height:2.1px;background:#333;border-radius:0.4px"></div>
<div class="abs" style="left:437.00px;top:90.90px;width:2.1px;height:2.1px;background:#333;border-radius:0.4px"></div>
<div class="abs t" style="left:456.40px;top:79.71px;font-size:16px;color:#333;transform:scaleX(0.7662);-webkit-text-stroke:0.30px #333;">9</div>
<div class="abs t" style="left:536.90px;top:79.71px;font-size:16px;color:#333;transform:scaleX(0.9356);-webkit-text-stroke:0.30px #333;">https://bootcss.com</div>
<div class="abs t" style="left:721.70px;top:79.71px;font-size:16px;color:#333;transform:scaleX(0.8684);-webkit-text-stroke:0.30px #333;">\templa</div>
<div class="abs" style="left:769.80px;top:90.90px;width:2.1px;height:2.1px;background:#333;border-radius:0.4px"></div>
<div class="abs" style="left:773.90px;top:90.90px;width:2.1px;height:2.1px;background:#333;border-radius:0.4px"></div>
<div class="abs" style="left:778.00px;top:90.90px;width:2.1px;height:2.1px;background:#333;border-radius:0.4px"></div>
<div class="abs t" style="left:800.40px;top:79.71px;font-size:16px;color:#333;transform:scaleX(0.8393);-webkit-text-stroke:0.30px #333;">index.ht</div>
<div class="abs" style="left:849.80px;top:90.90px;width:2.1px;height:2.1px;background:#333;border-radius:0.4px"></div>
<div class="abs" style="left:853.90px;top:90.90px;width:2.1px;height:2.1px;background:#333;border-radius:0.4px"></div>
<div class="abs" style="left:858.00px;top:90.90px;width:2.1px;height:2.1px;background:#333;border-radius:0.4px"></div>
<div class="abs t" style="left:879.00px;top:79.71px;font-size:16px;color:#333;transform:scaleX(0.7662);-webkit-text-stroke:0.30px #333;">9</div>
<div class="abs t" style="left:956.40px;top:79.71px;font-size:16px;color:#333;transform:scaleX(0.8727);-webkit-text-stroke:0.30px #333;">https://</div>
<div class="abs" style="left:1000.80px;top:90.90px;width:2.1px;height:2.1px;background:#333;border-radius:0.4px"></div>
<div class="abs" style="left:1004.90px;top:90.90px;width:2.1px;height:2.1px;background:#333;border-radius:0.4px"></div>
<div class="abs" style="left:1009.00px;top:90.90px;width:2.1px;height:2.1px;background:#333;border-radius:0.4px"></div>
<div class="abs t" style="left:1035.20px;top:79.71px;font-size:16px;color:#333;transform:scaleX(0.9075);-webkit-text-stroke:0.30px #333;">To Verify</div>
<div class="abs t" style="left:1112.70px;top:79.71px;font-size:16px;color:#333;transform:scaleX(0.8760);-webkit-text-stroke:0.30px #333;">High</div>
<div class="abs t" style="left:1191.30px;top:79.71px;font-size:16px;color:#333;transform:scaleX(0.8956);-webkit-text-stroke:0.30px #333;">https://</div>
<div class="abs" style="left:1236.80px;top:90.90px;width:2.1px;height:2.1px;background:#333;border-radius:0.4px"></div>
<div class="abs" style="left:1240.90px;top:90.90px;width:2.1px;height:2.1px;background:#333;border-radius:0.4px"></div>
<div class="abs" style="left:1245.00px;top:90.90px;width:2.1px;height:2.1px;background:#333;border-radius:0.4px"></div>
<div class="abs t" style="left:1269.30px;top:79.71px;font-size:16px;color:#333;transform:scaleX(0.5859);-webkit-text-stroke:0.30px #333;">1</div>
<div class="abs" style="left:0;top:142.60px;width:1505px;height:1px;background:#dcdcdc"></div>
<div class="abs" style="left:11.600000000000023px;top:116.5px;width:15px;height:15px;border:1.4px solid #606060;border-radius:3px;background:#fff"></div>
<div class="abs t" style="left:46.60px;top:116.81px;font-size:16px;color:#333;transform:scaleX(0.7662);-webkit-text-stroke:0.30px #333;">8</div>
<div class="abs t" style="left:108.90px;top:116.81px;font-size:16px;color:#333;transform:scaleX(0.8633);-webkit-text-stroke:0.30px #333;">2024/8</div>
<div class="abs" style="left:153.60px;top:128.00px;width:2.1px;height:2.1px;background:#333;border-radius:0.4px"></div>
<div class="abs" style="left:157.70px;top:128.00px;width:2.1px;height:2.1px;background:#333;border-radius:0.4px"></div>
<div class="abs" style="left:161.80px;top:128.00px;width:2.1px;height:2.1px;background:#333;border-radius:0.4px"></div>
<svg class="abs" style="left:187px;top:110.50px" width="22" height="21" viewBox="0 0 22 21"><defs><radialGradient id="lg3" cx="0.45" cy="0.4" r="0.6"><stop offset="0" stop-color="#c8c8c8"/><stop offset="0.6" stop-color="#8e8e8e"/><stop offset="1" stop-color="#5e5e5e"/></radialGradient></defs><ellipse cx="6" cy="14" rx="5.6" ry="4.7" transform="rotate(-45 6 14)" fill="url(#lg3)"/><ellipse cx="15.2" cy="5.8" rx="5.6" ry="4.3" transform="rotate(-40 15.2 5.8)" fill="url(#lg3)"/><path d="M8.8 11.2L12.6 7.6" stroke="#e8e8e8" stroke-width="0.9"/><path d="M5.8 12.2v4M3.8 14.2h4M15.2 3.8v4M13.2 5.8h4" stroke="#eaeaea" stroke-width="0.9"/></svg>
<div class="abs t" style="left:225.50px;top:117.39px;font-size:15.3px;color:#f00;font-weight:bold;transform:scaleX(0.8540);-webkit-text-stroke:0.30px #f00;">New</div>
<div class="abs t" style="left:300.40px;top:116.81px;font-size:16px;color:#333;transform:scaleX(0.8741);-webkit-text-stroke:0.30px #333;">\templa</div>
<div class="abs" style="left:348.80px;top:128.00px;width:2.1px;height:2.1px;background:#333;border-radius:0.4px"></div>
<div class="abs" style="left:352.90px;top:128.00px;width:2.1px;height:2.1px;background:#333;border-radius:0.4px"></div>
<div class="abs" style="left:357.00px;top:128.00px;width:2.1px;height:2.1px;background:#333;border-radius:0.4px"></div>
<div class="abs t" style="left:379.00px;top:116.81px;font-size:16px;color:#333;transform:scaleX(0.8464);-webkit-text-stroke:0.30px #333;">index.ht</div>
<div class="abs" style="left:428.80px;top:128.00px;width:2.1px;height:2.1px;background:#333;border-radius:0.4px"></div>
<div class="abs" style="left:432.90px;top:128.00px;width:2.1px;height:2.1px;background:#333;border-radius:0.4px"></div>
<div class="abs" style="left:437.00px;top:128.00px;width:2.1px;height:2.1px;background:#333;border-radius:0.4px"></div>
<div class="abs t" style="left:456.40px;top:116.81px;font-size:16px;color:#333;transform:scaleX(0.9352);-webkit-text-stroke:0.30px #333;">10</div>
<div class="abs t" style="left:536.90px;top:116.81px;font-size:16px;color:#333;transform:scaleX(0.9440);-webkit-text-stroke:0.30px #333;">http://bootcss.com</div>
<div class="abs t" style="left:721.70px;top:116.81px;font-size:16px;color:#333;transform:scaleX(0.8684);-webkit-text-stroke:0.30px #333;">\templa</div>
<div class="abs" style="left:769.80px;top:128.00px;width:2.1px;height:2.1px;background:#333;border-radius:0.4px"></div>
<div class="abs" style="left:773.90px;top:128.00px;width:2.1px;height:2.1px;background:#333;border-radius:0.4px"></div>
<div class="abs" style="left:778.00px;top:128.00px;width:2.1px;height:2.1px;background:#333;border-radius:0.4px"></div>
<div class="abs t" style="left:800.40px;top:116.81px;font-size:16px;color:#333;transform:scaleX(0.8393);-webkit-text-stroke:0.30px #333;">index.ht</div>
<div class="abs" style="left:849.80px;top:128.00px;width:2.1px;height:2.1px;background:#333;border-radius:0.4px"></div>
<div class="abs" style="left:853.90px;top:128.00px;width:2.1px;height:2.1px;background:#333;border-radius:0.4px"></div>
<div class="abs" style="left:858.00px;top:128.00px;width:2.1px;height:2.1px;background:#333;border-radius:0.4px"></div>
<div class="abs t" style="left:879.00px;top:116.81px;font-size:16px;color:#333;transform:scaleX(0.9296);-webkit-text-stroke:0.30px #333;">10</div>
<div class="abs t" style="left:956.40px;top:116.81px;font-size:16px;color:#333;transform:scaleX(0.8593);-webkit-text-stroke:0.30px #333;">http://b</div>
<div class="abs" style="left:1000.80px;top:128.00px;width:2.1px;height:2.1px;background:#333;border-radius:0.4px"></div>
<div class="abs" style="left:1004.90px;top:128.00px;width:2.1px;height:2.1px;background:#333;border-radius:0.4px"></div>
<div class="abs" style="left:1009.00px;top:128.00px;width:2.1px;height:2.1px;background:#333;border-radius:0.4px"></div>
<div class="abs t" style="left:1035.20px;top:116.81px;font-size:16px;color:#333;transform:scaleX(0.9075);-webkit-text-stroke:0.30px #333;">To Verify</div>
<div class="abs t" style="left:1112.70px;top:116.81px;font-size:16px;color:#333;transform:scaleX(0.8760);-webkit-text-stroke:0.30px #333;">High</div>
<div class="abs t" style="left:1191.30px;top:116.81px;font-size:16px;color:#333;transform:scaleX(0.8818);-webkit-text-stroke:0.30px #333;">http://b</div>
<div class="abs" style="left:1236.80px;top:128.00px;width:2.1px;height:2.1px;background:#333;border-radius:0.4px"></div>
<div class="abs" style="left:1240.90px;top:128.00px;width:2.1px;height:2.1px;background:#333;border-radius:0.4px"></div>
<div class="abs" style="left:1245.00px;top:128.00px;width:2.1px;height:2.1px;background:#333;border-radius:0.4px"></div>
<div class="abs t" style="left:1269.30px;top:116.81px;font-size:16px;color:#333;transform:scaleX(0.5859);-webkit-text-stroke:0.30px #333;">1</div>
<div class="abs" style="left:0;top:143.10px;width:1505px;height:37.1px;background:#80cddb"></div>
<div class="abs" style="left:0;top:179.70px;width:1505px;height:1px;background:#dcdcdc"></div>
<div class="abs" style="left:11.600000000000023px;top:153.60000000000002px;width:15px;height:15px;border:1.4px solid #606060;border-radius:3px;background:#fff"></div>
<div class="abs t" style="left:46.60px;top:153.91px;font-size:16px;color:#fff;transform:scaleX(0.7662);-webkit-text-stroke:0.30px #fff;">9</div>
<div class="abs t" style="left:108.90px;top:153.91px;font-size:16px;color:#fff;transform:scaleX(0.8633);-webkit-text-stroke:0.30px #fff;">2024/8</div>
<div class="abs" style="left:153.60px;top:165.10px;width:2.1px;height:2.1px;background:#fff;border-radius:0.4px"></div>
<div class="abs" style="left:157.70px;top:165.10px;width:2.1px;height:2.1px;background:#fff;border-radius:0.4px"></div>
<div class="abs" style="left:161.80px;top:165.10px;width:2.1px;height:2.1px;background:#fff;border-radius:0.4px"></div>
<svg class="abs" style="left:187px;top:147.60px" width="22" height="21" viewBox="0 0 22 21"><defs><radialGradient id="lg4" cx="0.45" cy="0.4" r="0.6"><stop offset="0" stop-color="#c8c8c8"/><stop offset="0.6" stop-color="#8e8e8e"/><stop offset="1" stop-color="#5e5e5e"/></radialGradient></defs><ellipse cx="6" cy="14" rx="5.6" ry="4.7" transform="rotate(-45 6 14)" fill="url(#lg4)"/><ellipse cx="15.2" cy="5.8" rx="5.6" ry="4.3" transform="rotate(-40 15.2 5.8)" fill="url(#lg4)"/><path d="M8.8 11.2L12.6 7.6" stroke="#e8e8e8" stroke-width="0.9"/><path d="M5.8 12.2v4M3.8 14.2h4M15.2 3.8v4M13.2 5.8h4" stroke="#eaeaea" stroke-width="0.9"/></svg>
<div class="abs t" style="left:225.50px;top:154.49px;font-size:15.3px;color:#f00;font-weight:bold;transform:scaleX(0.8540);-webkit-text-stroke:0.30px #f00;">New</div>
<div class="abs t" style="left:300.40px;top:153.91px;font-size:16px;color:#fff;transform:scaleX(0.8741);-webkit-text-stroke:0.30px #fff;">\templa</div>
<div class="abs" style="left:348.80px;top:165.10px;width:2.1px;height:2.1px;background:#fff;border-radius:0.4px"></div>
<div class="abs" style="left:352.90px;top:165.10px;width:2.1px;height:2.1px;background:#fff;border-radius:0.4px"></div>
<div class="abs" style="left:357.00px;top:165.10px;width:2.1px;height:2.1px;background:#fff;border-radius:0.4px"></div>
<div class="abs t" style="left:379.00px;top:153.91px;font-size:16px;color:#fff;transform:scaleX(0.8464);-webkit-text-stroke:0.30px #fff;">index.ht</div>
<div class="abs" style="left:428.80px;top:165.10px;width:2.1px;height:2.1px;background:#fff;border-radius:0.4px"></div>
<div class="abs" style="left:432.90px;top:165.10px;width:2.1px;height:2.1px;background:#fff;border-radius:0.4px"></div>
<div class="abs" style="left:437.00px;top:165.10px;width:2.1px;height:2.1px;background:#fff;border-radius:0.4px"></div>
<div class="abs t" style="left:456.40px;top:153.91px;font-size:16px;color:#fff;transform:scaleX(0.9985);-webkit-text-stroke:0.30px #fff;">11</div>
<div class="abs t" style="left:536.90px;top:153.91px;font-size:16px;color:#fff;transform:scaleX(0.9525);-webkit-text-stroke:0.30px #fff;">https://staticfile.net</div>
<div class="abs t" style="left:721.70px;top:153.91px;font-size:16px;color:#fff;transform:scaleX(0.8684);-webkit-text-stroke:0.30px #fff;">\templa</div>
<div class="abs" style="left:769.80px;top:165.10px;width:2.1px;height:2.1px;background:#fff;border-radius:0.4px"></div>
<div class="abs" style="left:773.90px;top:165.10px;width:2.1px;height:2.1px;background:#fff;border-radius:0.4px"></div>
<div class="abs" style="left:778.00px;top:165.10px;width:2.1px;height:2.1px;background:#fff;border-radius:0.4px"></div>
<div class="abs t" style="left:800.40px;top:153.91px;font-size:16px;color:#fff;transform:scaleX(0.8393);-webkit-text-stroke:0.30px #fff;">index.ht</div>
<div class="abs" style="left:849.80px;top:165.10px;width:2.1px;height:2.1px;background:#fff;border-radius:0.4px"></div>
<div class="abs" style="left:853.90px;top:165.10px;width:2.1px;height:2.1px;background:#fff;border-radius:0.4px"></div>
<div class="abs" style="left:858.00px;top:165.10px;width:2.1px;height:2.1px;background:#fff;border-radius:0.4px"></div>
<div class="abs t" style="left:879.00px;top:153.91px;font-size:16px;color:#fff;transform:scaleX(0.9925);-webkit-text-stroke:0.30px #fff;">11</div>
<div class="abs t" style="left:956.40px;top:153.91px;font-size:16px;color:#fff;transform:scaleX(0.8727);-webkit-text-stroke:0.30px #fff;">https://</div>
<div class="abs" style="left:1000.80px;top:165.10px;width:2.1px;height:2.1px;background:#fff;border-radius:0.4px"></div>
<div class="abs" style="left:1004.90px;top:165.10px;width:2.1px;height:2.1px;background:#fff;border-radius:0.4px"></div>
<div class="abs" style="left:1009.00px;top:165.10px;width:2.1px;height:2.1px;background:#fff;border-radius:0.4px"></div>
<div class="abs t" style="left:1035.20px;top:153.91px;font-size:16px;color:#fff;transform:scaleX(0.9075);-webkit-text-stroke:0.30px #fff;">To Verify</div>
<div class="abs t" style="left:1112.70px;top:153.91px;font-size:16px;color:#fff;transform:scaleX(0.8760);-webkit-text-stroke:0.30px #fff;">High</div>
<div class="abs t" style="left:1191.30px;top:153.91px;font-size:16px;color:#fff;transform:scaleX(0.8956);-webkit-text-stroke:0.30px #fff;">https://</div>
<div class="abs" style="left:1236.80px;top:165.10px;width:2.1px;height:2.1px;background:#fff;border-radius:0.4px"></div>
<div class="abs" style="left:1240.90px;top:165.10px;width:2.1px;height:2.1px;background:#fff;border-radius:0.4px"></div>
<div class="abs" style="left:1245.00px;top:165.10px;width:2.1px;height:2.1px;background:#fff;border-radius:0.4px"></div>
<div class="abs t" style="left:1269.30px;top:153.91px;font-size:16px;color:#fff;transform:scaleX(0.5859);-webkit-text-stroke:0.30px #fff;">1</div>
<div class="abs" style="left:0;top:216.80px;width:1505px;height:1px;background:#dcdcdc"></div>
<div class="abs" style="left:11.600000000000023px;top:190.70000000000005px;width:15px;height:15px;border:1.4px solid #606060;border-radius:3px;background:#fff"></div>
<svg class="abs" style="left:187px;top:184.70px" width="22" height="21" viewBox="0 0 22 21"><defs><radialGradient id="lg5" cx="0.45" cy="0.4" r="0.6"><stop offset="0" stop-color="#c8c8c8"/><stop offset="0.6" stop-color="#8e8e8e"/><stop offset="1" stop-color="#5e5e5e"/></radialGradient></defs><ellipse cx="6" cy="14" rx="5.6" ry="4.7" transform="rotate(-45 6 14)" fill="url(#lg5)"/><ellipse cx="15.2" cy="5.8" rx="5.6" ry="4.3" transform="rotate(-40 15.2 5.8)" fill="url(#lg5)"/><path d="M8.8 11.2L12.6 7.6" stroke="#e8e8e8" stroke-width="0.9"/><path d="M5.8 12.2v4M3.8 14.2h4M15.2 3.8v4M13.2 5.8h4" stroke="#eaeaea" stroke-width="0.9"/></svg>
</div>
<div class="abs" style="left:1894px;top:666px;width:19px;height:194px;background:#fafafa"></div>
<svg class="abs" style="left:1897px;top:673px" width="13" height="10" viewBox="0 0 13 10"><path d="M6.5 1L12 9H1Z" fill="#8a8a8a" stroke="#8a8a8a" stroke-linejoin="round" stroke-width="1.2"/></svg>
<div class="abs" style="left:1898px;top:751px;width:11px;height:76px;background:#8a8a8a;border-radius:5.5px"></div>
<svg class="abs" style="left:1897px;top:845px" width="13" height="10" viewBox="0 0 13 10"><path d="M1 1H12L6.5 9Z" fill="#8a8a8a" stroke="#8a8a8a" stroke-linejoin="round" stroke-width="1.2"/></svg>
<div class="abs" style="left:389px;top:860px;width:1524px;height:19px;background:#fcfcfc"></div>
<svg class="abs" style="left:394px;top:864px" width="10" height="13" viewBox="0 0 10 13"><path d="M1 6.5L9 1V12Z" fill="#8a8a8a" stroke="#8a8a8a" stroke-linejoin="round" stroke-width="1.2"/></svg>
<div class="abs" style="left:411.8px;top:864px;width:1364px;height:11px;background:#8a8a8a;border-radius:5.5px"></div>
<svg class="abs" style="left:1879px;top:864px" width="10" height="13" viewBox="0 0 10 13"><path d="M9 6.5L1 1V12Z" fill="#8a8a8a" stroke="#8a8a8a" stroke-linejoin="round" stroke-width="1.2"/></svg>
<div class="abs" style="left:389px;top:879px;width:1524px;height:42px;background:#e4e4e4;border-bottom:1px solid #cdcdcd"></div>
<div class="abs" style="left:403.6px;top:880.7px;width:33.3px;height:33.3px;border-radius:4px;background:linear-gradient(#fdfdfd,#e9e9e9);box-shadow:0 1px 1.5px rgba(0,0,0,0.25),0 0 0 1px #d6d6d6 inset"></div>
<svg class="abs" style="left:414px;top:891px" width="12" height="13" viewBox="0 0 12 13"><path d="M1 0V13" stroke="#999" stroke-width="1.4"/><path d="M3 6.5L11.5 1V12Z" fill="#a3a3a3"/></svg>
<div class="abs" style="left:441.6px;top:880.7px;width:34.0px;height:33.3px;border-radius:4px;background:linear-gradient(#fdfdfd,#e9e9e9);box-shadow:0 1px 1.5px rgba(0,0,0,0.25),0 0 0 1px #d6d6d6 inset"></div>
<svg class="abs" style="left:452px;top:891px" width="12" height="13" viewBox="0 0 12 13"><path d="M1 6.5L10 1V12Z" fill="#a3a3a3"/></svg>
<div class="abs" style="left:479px;top:880px;width:20.7px;height:34px;border-radius:5px;background:#14a9c8"></div>
<div class="abs t" style="left:487.00px;top:889.37px;font-size:14px;color:#fff;transform:scaleX(0.6194);-webkit-text-stroke:0.25px #fff;">1</div>
<div class="abs t" style="left:507.40px;top:889.37px;font-size:14px;color:#222;transform:scaleX(0.8774);-webkit-text-stroke:0.25px #222;">2</div>
<div class="abs t" style="left:528.50px;top:889.37px;font-size:14px;color:#222;transform:scaleX(0.8387);-webkit-text-stroke:0.25px #222;">3</div>
<div class="abs t" style="left:548.80px;top:889.37px;font-size:14px;color:#222;transform:scaleX(0.8645);-webkit-text-stroke:0.25px #222;">4</div>
<div class="abs" style="left:565.8px;top:880.7px;width:33.5px;height:33.3px;border-radius:4px;background:linear-gradient(#fdfdfd,#e9e9e9);box-shadow:0 1px 1.5px rgba(0,0,0,0.25),0 0 0 1px #d6d6d6 inset"></div>
<svg class="abs" style="left:578px;top:891px" width="12" height="13" viewBox="0 0 12 13"><path d="M11 6.5L2 1V12Z" fill="#a3a3a3"/></svg>
<div class="abs" style="left:604.7px;top:880.7px;width:33.7px;height:33.3px;border-radius:4px;background:linear-gradient(#fdfdfd,#e9e9e9);box-shadow:0 1px 1.5px rgba(0,0,0,0.25),0 0 0 1px #d6d6d6 inset"></div>
<svg class="abs" style="left:616px;top:891px" width="12" height="14" viewBox="0 0 12 14"><path d="M10.5 0V14" stroke="#999" stroke-width="1.4"/><path d="M8.5 6.5L0.5 1V12Z" fill="#a3a3a3"/></svg>
<div class="abs t" style="left:666.10px;top:890.44px;font-size:15px;color:#333;transform:scaleX(0.9243);-webkit-text-stroke:0.20px #333;">Page size:</div>
<div class="abs" style="left:736.6px;top:880.4px;width:83px;height:33px;background:linear-gradient(#fff,#e6e6e6);border:1px solid #c9c9c9"></div>
<div class="abs t" style="left:744.40px;top:890.44px;font-size:15px;color:#555;transform:scaleX(0.8782);-webkit-text-stroke:0.20px #555;">10</div>
<svg class="abs" style="left:797.8px;top:891.9px" width="12.3" height="9" viewBox="0 0 12.3 9"><path d="M0 0H12.3L6.15 9Z" fill="#999"/></svg>
<div class="abs t" style="left:1775.80px;top:890.04px;font-size:15px;color:#2a9fc0;transform:scaleX(0.8782);-webkit-text-stroke:0.20px #2a9fc0;">31</div>
<div class="abs t" style="left:1796.00px;top:890.04px;font-size:15px;color:#333;transform:scaleX(0.9627);-webkit-text-stroke:0.20px #333;">items in</div>
<div class="abs t" style="left:1850.80px;top:890.04px;font-size:15px;color:#2a9fc0;transform:scaleX(0.8358);-webkit-text-stroke:0.20px #2a9fc0;">4</div>
<div class="abs t" style="left:1861.70px;top:890.04px;font-size:15px;color:#333;transform:scaleX(0.9223);-webkit-text-stroke:0.20px #333;">pages</div>


</body></html>
